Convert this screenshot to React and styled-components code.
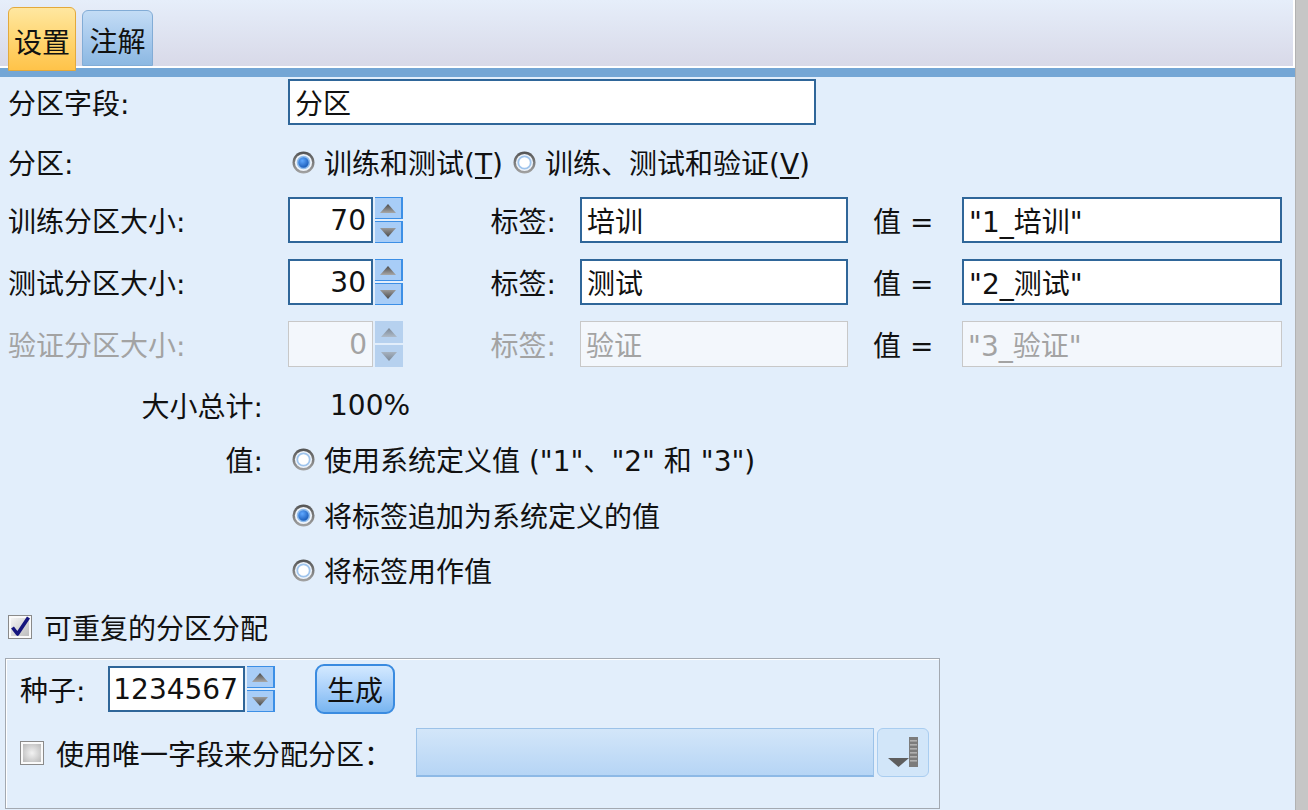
import React from 'react'
import styled, { createGlobalStyle } from 'styled-components'

const GlobalStyle = createGlobalStyle`
  html, body {
    margin: 0;
    padding: 0;
    background: #e2eefb;
  }
  body {
    font-family: 'DejaVu Sans', 'Noto Sans CJK SC', sans-serif;
    font-size: 28px;
    color: #111;
  }
`

function RadioIcon({ checked }) {
    return (
        <svg width="23" height="23" viewBox="0 0 23 23">
            <defs>
                <linearGradient id="radio-ring" x1="0" y1="0" x2="0" y2="1">
                    <stop offset="0" stopColor="#525252" />
                    <stop offset="1" stopColor="#a4a4a4" />
                </linearGradient>
                <radialGradient id="radio-dot" cx="0.4" cy="0.35" r="0.75">
                    <stop offset="0" stopColor="#5fa8ff" />
                    <stop offset="1" stopColor="#0a4aa8" />
                </radialGradient>
            </defs>
            <circle cx="11.5" cy="11.5" r="11" fill="url(#radio-ring)" />
            <circle cx="11.5" cy="11.5" r="8.6" fill="#eef3f9" />
            {checked ? (
                <circle cx="11.5" cy="11.5" r="6" fill="url(#radio-dot)" stroke="#8fbcec" strokeWidth="1.6" />
            ) : (
                <circle cx="11.5" cy="11.5" r="6.2" fill="#ffffff" stroke="#9fc4ec" strokeWidth="1.8" />
            )}
        </svg>
    )
}

function CheckIcon({ checked }) {
    return (
        <svg width="24" height="24" viewBox="0 0 24 24">
            <defs>
                <linearGradient id="check-fill" x1="0" y1="0" x2="1" y2="1">
                    <stop offset="0" stopColor="#f4f4f4" />
                    <stop offset="1" stopColor="#bdbdbd" />
                </linearGradient>
                <radialGradient id="check-off" cx="0.5" cy="0.5" r="0.7">
                    <stop offset="0" stopColor="#f2f2f2" />
                    <stop offset="1" stopColor="#b9b9b9" />
                </radialGradient>
            </defs>
            <rect x="0.5" y="0.5" width="23" height="23" fill="#fafafa" stroke="#8a8a8a" />
            <rect x="3" y="3" width="18" height="18" fill={checked ? 'url(#check-fill)' : 'url(#check-off)'} />
            {checked && (
                <path d="M4.5 12.5 L9.5 19 L20.5 2.5" stroke="#16167e" strokeWidth="3.6" fill="none" strokeLinejoin="round" />
            )}
        </svg>
    )
}

function Arrow({ up, disabled }) {
    return (
        <svg width="16" height="9" viewBox="0 0 16 9">
            <defs>
                <linearGradient id={up ? 'arrow-up' : 'arrow-down'} x1="0" y1="0" x2="0" y2="1">
                    <stop offset="0" stopColor={up ? '#4a4a4a' : '#9a9a9a'} />
                    <stop offset="1" stopColor={up ? '#a8a8a8' : '#4a4a4a'} />
                </linearGradient>
            </defs>
            <polygon
                points={up ? '8,0 16,9 0,9' : '0,0 16,0 8,9'}
                fill={`url(#${up ? 'arrow-up' : 'arrow-down'})`}
                opacity={disabled ? 0.55 : 1}
            />
        </svg>
    )
}

function FieldPickerIcon() {
    return (
        <svg width="36" height="36" viewBox="0 0 36 36">
            <rect x="24" y="2" width="9" height="30" fill="#7c7c7c" />
            {[5, 9, 13, 17, 21, 25].map(y => (
                <rect key={y} x="25" y={y} width="7" height="1.6" fill="#b0b0b0" />
            ))}
            <polygon points="3,23 24,23 13.5,32" fill="#5e5e5e" />
        </svg>
    )
}

function Spinner({ value, width, disabled }) {
    return (
        <SpinWrap>
            <Field $w={width} $align="flex-end" $disabled={disabled}>{value}</Field>
            <SpinButtons $disabled={disabled}>
                <SpinButton $disabled={disabled}><Arrow up disabled={disabled} /></SpinButton>
                <SpinButton $disabled={disabled}><Arrow disabled={disabled} /></SpinButton>
            </SpinButtons>
        </SpinWrap>
    )
}

function Radio({ checked, children, offset }) {
    return (
        <RadioItem $offset={offset}>
            <RadioIcon checked={checked} />
            <span>{children}</span>
        </RadioItem>
    )
}

const sizeRows = [
    { name: '训练分区大小:', size: '70', tag: '培训', value: '"1_培训"' },
    { name: '测试分区大小:', size: '30', tag: '测试', value: '"2_测试"' },
    { name: '验证分区大小:', size: '0', tag: '验证', value: '"3_验证"', disabled: true },
]

function App() {
    return (
        <Window>
            <GlobalStyle />
            <Main>
                <TabStrip>
                    <Tab $active>设置</Tab>
                    <Tab>注解</Tab>
                </TabStrip>
                <AccentBar />
                <Form>
                    <Row>
                        <Label>分区字段:</Label>
                        <Field $w={528}>分区</Field>
                    </Row>
                    <Row $gap={14}>
                        <Label>分区:</Label>
                        <Radio checked offset={4}>训练和测试(<u>T</u>)</Radio>
                        <Radio offset={10}>训练、测试和验证(<u>V</u>)</Radio>
                    </Row>
                    {sizeRows.map((r, i) => (
                        <Row key={r.name} $gap={i === 0 ? 12 : 16}>
                            <Label $disabled={r.disabled}>{r.name}</Label>
                            <Spinner value={r.size} width={85} disabled={r.disabled} />
                            <TagLabel $disabled={r.disabled}>标签:</TagLabel>
                            <Field $w={268} $disabled={r.disabled}>{r.tag}</Field>
                            <ValueLabel>值 =</ValueLabel>
                            <Field $w={320} $disabled={r.disabled}>{r.value}</Field>
                        </Row>
                    ))}
                    <Row $gap={15}>
                        <Label $right>大小总计:</Label>
                        <Total>100%</Total>
                    </Row>
                    <Row $gap={8}>
                        <Label $right>值:</Label>
                        <Radio offset={4}>使用系统定义值 ("1"、"2" 和 "3")</Radio>
                    </Row>
                    <Row $gap={10}>
                        <Label />
                        <Radio checked offset={4}>将标签追加为系统定义的值</Radio>
                    </Row>
                    <Row $gap={9}>
                        <Label />
                        <Radio offset={4}>将标签用作值</Radio>
                    </Row>
                    <Row $gap={11}>
                        <CheckItem $offset={8}>
                            <CheckIcon checked />
                            <span>可重复的分区分配</span>
                        </CheckItem>
                    </Row>
                    <GroupBox>
                        <GroupRow $h={50}>
                            <SeedLabel>种子:</SeedLabel>
                            <Spinner value="1234567" width={137} />
                            <GenerateButton>生成</GenerateButton>
                        </GroupRow>
                        <GroupRow $h={49} $gap={14}>
                            <CheckItem $w={396}>
                                <CheckIcon />
                                <span>使用唯一字段来分配分区：</span>
                            </CheckItem>
                            <FieldSelect />
                            <PickerButton><FieldPickerIcon /></PickerButton>
                        </GroupRow>
                    </GroupBox>
                </Form>
            </Main>
            <ScrollEdge />
        </Window>
    )
}

export default App

const Window = styled.div`
    width: 1308px;
    height: 810px;
    display: flex;
    overflow: hidden;
    background: #e2eefb;
`

const Main = styled.div`
    flex: 1;
    min-width: 0;
    display: flex;
    flex-direction: column;
`

const ScrollEdge = styled.div`
    width: 12px;
    flex-shrink: 0;
    background: #c6c6c6;
    border-left: 1px solid #b2b2b2;
`

const TabStrip = styled.div`
    height: 66px;
    display: flex;
    align-items: flex-end;
    gap: 6px;
    padding-left: 8px;
    background: linear-gradient(#e6eefa, #d8d9e8);
    border-bottom: 2px solid #ffffff;
    border-right: 2px solid #ffffff;
`

const Tab = styled.div`
    position: relative;
    z-index: 1;
    display: flex;
    align-items: center;
    justify-content: center;
    box-sizing: border-box;
    white-space: nowrap;
    padding: 4px 0 0;
    height: ${p => (p.$active ? '64px' : '56px')};
    margin-bottom: ${p => (p.$active ? '-5px' : '0')};
    width: ${p => (p.$active ? '68px' : '71px')};
    border-radius: 6px 6px 0 0;
    border: 1px solid ${p => (p.$active ? '#e3a93c' : '#82acd6')};
    background: ${p => (p.$active
        ? 'linear-gradient(#ffe7a0, #ffd46e 55%, #ffc349)'
        : 'linear-gradient(#c3dcf5, #a5c8ec 55%, #8cb8e2)')};
    color: #111;
`

const AccentBar = styled.div`
    height: 9px;
    background: #74a6d5;
`

const Form = styled.div`
    padding-top: 2px;
    display: flex;
    flex-direction: column;
`

const Row = styled.div`
    display: flex;
    align-items: center;
    height: 46px;
    margin-top: ${p => p.$gap || 0}px;
`

const Label = styled.div`
    width: 288px;
    flex-shrink: 0;
    box-sizing: border-box;
    padding-left: 8px;
    padding-right: ${p => (p.$right ? '25px' : '0')};
    text-align: ${p => (p.$right ? 'right' : 'left')};
    color: ${p => (p.$disabled ? '#a3a3a3' : '#111')};
    white-space: nowrap;
`

const Field = styled.div`
    width: ${p => p.$w}px;
    height: 46px;
    flex-shrink: 0;
    box-sizing: border-box;
    display: flex;
    align-items: center;
    justify-content: ${p => p.$align || 'flex-start'};
    padding: 0 5px;
    background: ${p => (p.$disabled ? '#f3f7fc' : '#ffffff')};
    border: ${p => (p.$disabled ? '1px solid #c8c8c8' : '2px solid #2f6699')};
    color: ${p => (p.$disabled ? '#a3a3a3' : '#111')};
    white-space: nowrap;
    overflow: hidden;
`

const SpinWrap = styled.div`
    display: flex;
    align-items: stretch;
    height: 46px;
`

const SpinButtons = styled.div`
    width: 28px;
    margin-left: 2px;
    display: flex;
    flex-direction: column;
    gap: 2px;
`

const SpinButton = styled.div`
    flex: 1;
    display: flex;
    align-items: center;
    justify-content: center;
    box-sizing: border-box;
    background: ${p => (p.$disabled ? '#b6d1ef' : '#a8cdf7')};
    border: ${p => (p.$disabled ? 'none' : '1px solid #3c8fe6')};
    border-right-width: ${p => (p.$disabled ? '0' : '2px')};
    border-left: none;
`

const TagLabel = styled.div`
    width: 177px;
    box-sizing: border-box;
    padding-right: 24px;
    text-align: right;
    color: ${p => (p.$disabled ? '#a3a3a3' : '#111')};
`

const ValueLabel = styled.div`
    width: 114px;
    box-sizing: border-box;
    padding-left: 25px;
    white-space: nowrap;
`

const Total = styled.div`
    padding-left: 42px;
`

const RadioItem = styled.div`
    display: flex;
    align-items: center;
    gap: 9px;
    margin-left: ${p => p.$offset || 0}px;
    white-space: nowrap;
    svg { flex-shrink: 0; }
    u { text-underline-offset: 3px; }
`

const CheckItem = styled.div`
    display: flex;
    align-items: center;
    gap: 12px;
    margin-left: ${p => p.$offset || 0}px;
    width: ${p => (p.$w ? `${p.$w}px` : 'auto')};
    flex-shrink: 0;
    white-space: nowrap;
`

const GroupBox = styled.div`
    margin: 8px 0 0 5px;
    width: 935px;
    height: 151px;
    box-sizing: border-box;
    border: 1px solid #a3a9b1;
    box-shadow: inset 1px 1px 0 #ffffff;
    padding: 5px 0 0 14px;
`

const GroupRow = styled.div`
    display: flex;
    align-items: center;
    height: ${p => p.$h}px;
    margin-top: ${p => p.$gap || 0}px;
`

const SeedLabel = styled.div`
    width: 88px;
    flex-shrink: 0;
`

const GenerateButton = styled.div`
    margin-left: 40px;
    width: 80px;
    height: 50px;
    box-sizing: border-box;
    display: flex;
    align-items: center;
    justify-content: center;
    border: 2px solid #3a8be0;
    border-radius: 9px;
    background: linear-gradient(#d3e9ff, #a9d0fa 50%, #78b5f0);
    color: #111;
`

const FieldSelect = styled.div`
    width: 458px;
    height: 49px;
    box-sizing: border-box;
    border: 1px solid #9cc2e8;
    border-bottom: 2px solid #8db9e6;
    background: linear-gradient(#d3e6f9, #b6d5f5);
`

const PickerButton = styled.div`
    margin-left: 3px;
    width: 52px;
    height: 49px;
    box-sizing: border-box;
    display: flex;
    align-items: center;
    justify-content: center;
    border: 1px solid #a9cdf0;
    border-radius: 6px;
    background: #d2e6f9;
`
